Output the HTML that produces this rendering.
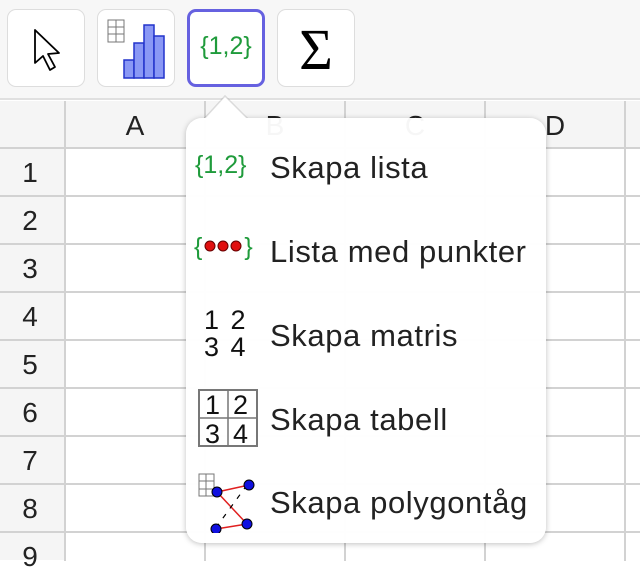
<!DOCTYPE html>
<html><head><meta charset="utf-8"><style>
*{margin:0;padding:0;box-sizing:border-box}
body{width:640px;height:560px;overflow:hidden;background:#fff;font-family:"Liberation Sans",sans-serif;position:relative}
.tb{position:absolute;left:0;top:0;width:640px;height:100px;background:#f7f7f7;border-bottom:2px solid #e0e0e0}
.btn{position:absolute;top:9px;width:78px;height:78px;background:#fff;border:1px solid #ddd;border-radius:9px}
.sel{border:3px solid #6661e0}
.hdr{position:absolute;left:0;top:101px;width:640px;height:47px;background:#f5f5f5}
.rh{position:absolute;left:0;top:148px;width:65px;height:412px;background:#f5f5f5}
.vl{position:absolute;top:101px;width:2px;height:460px;background:#d2d2d2}
.hl{position:absolute;left:0;width:640px;height:2px;background:#d2d2d2}
.t{position:absolute;font-size:28px;color:#222;text-align:center}
.pop{position:absolute;left:186px;top:118px;width:360px;height:425px;background:rgba(255,255,255,.96);border-radius:16px;box-shadow:0 1px 6px rgba(0,0,0,.25)}
.it{position:absolute;left:84px;font-size:31px;letter-spacing:0.6px;color:#222;white-space:nowrap}
.g{color:#1f9b3b}
</style></head><body>
<div class="tb"></div>
<div class="btn" style="left:7px"><svg width="78" height="78"><path d="M27 20 L27 53 L35 46 L42 60 L47 57 L40 44 L51 43 Z" fill="#fff" stroke="#000" stroke-width="1.8" stroke-linejoin="round"/></svg></div>
<div class="btn" style="left:97px"><svg width="78" height="78"><g fill="none" stroke="#777" stroke-width="1"><rect x="10" y="10" width="16" height="22"/><path d="M18 10V32M10 17H26M10 24H26"/></g><g fill="#8a98f5" stroke="#2233cc" stroke-width="1.5"><rect x="26" y="50" width="10" height="18"/><rect x="36" y="33" width="10" height="35"/><rect x="46" y="15" width="10" height="53"/><rect x="56" y="26" width="10" height="42"/></g></svg></div>
<div class="btn sel" style="left:187px"><div style="position:absolute;left:0;right:0;top:20px;text-align:center;font-size:25px;color:#1f9b3b">{1,2}</div></div>
<div class="btn" style="left:277px"><div style="position:absolute;left:0;right:0;top:6px;text-align:center;font-size:58px;font-family:'Liberation Serif',serif;color:#000">Σ</div></div>
<div class="hdr"></div><div class="rh"></div>
<div class="vl" style="left:64px"></div><div class="vl" style="left:204px"></div><div class="vl" style="left:344px"></div><div class="vl" style="left:484px"></div><div class="vl" style="left:624px"></div>
<div class="hl" style="top:147px"></div><div class="hl" style="top:195px"></div><div class="hl" style="top:243px"></div><div class="hl" style="top:291px"></div><div class="hl" style="top:339px"></div><div class="hl" style="top:387px"></div><div class="hl" style="top:435px"></div><div class="hl" style="top:483px"></div><div class="hl" style="top:531px"></div>
<div class="t" style="left:65px;width:140px;top:110px">A</div><div class="t" style="left:205px;width:140px;top:110px">B</div><div class="t" style="left:345px;width:140px;top:110px">C</div><div class="t" style="left:485px;width:140px;top:110px">D</div>
<div class="t" style="left:0;width:60px;top:157px">1</div><div class="t" style="left:0;width:60px;top:205px">2</div><div class="t" style="left:0;width:60px;top:253px">3</div><div class="t" style="left:0;width:60px;top:301px">4</div><div class="t" style="left:0;width:60px;top:349px">5</div><div class="t" style="left:0;width:60px;top:397px">6</div><div class="t" style="left:0;width:60px;top:445px">7</div><div class="t" style="left:0;width:60px;top:493px">8</div><div class="t" style="left:0;width:60px;top:541px">9</div>
<div class="pop">
<svg style="position:absolute;left:18px;top:-26px" width="44" height="28"><path d="M0 27 L21 4 L44 27" fill="#fff" stroke="rgba(0,0,0,.12)" stroke-width="1.5"/><rect x="0" y="26" width="44" height="4" fill="#fff"/></svg>
<div style="position:absolute;left:9px;top:33px;font-size:25px" class="g">{1,2}</div>
<div class="it" style="top:32px">Skapa lista</div>
<div style="position:absolute;left:8px;top:115px;font-size:25px" class="g">{<svg width="42" height="16" style="vertical-align:1px"><g fill="#e01010" stroke="#600" stroke-width="1"><circle cx="8" cy="8" r="5"/><circle cx="21" cy="8" r="5"/><circle cx="34" cy="8" r="5"/></g></svg>}</div>
<div class="it" style="top:116px">Lista med punkter</div>
<div style="position:absolute;left:18px;top:189px;font-size:27px;line-height:27px;color:#111;word-spacing:4px">1 2<br>3 4</div>
<div class="it" style="top:200px">Skapa matris</div>
<svg style="position:absolute;left:12px;top:271px" width="62" height="60"><rect x="1" y="1" width="58" height="56" fill="none" stroke="#777" stroke-width="2"/><path d="M30 1V57M1 29H59" stroke="#777" stroke-width="1.5"/><g font-family="Liberation Sans" font-size="27" fill="#111"><text x="7" y="25">1</text><text x="35" y="25">2</text><text x="7" y="54">3</text><text x="35" y="54">4</text></g></svg>
<div class="it" style="top:284px">Skapa tabell</div>
<svg style="position:absolute;left:12px;top:355px" width="66" height="60"><g fill="none" stroke="#777" stroke-width="1"><rect x="1" y="1" width="15" height="22"/><path d="M8 1V23M1 8H16M1 16H16"/></g><path d="M19 19L51 12M19 19L49 51M18 56L49 51" stroke="#e02020" stroke-width="1.5" fill="none"/><path d="M49 12L17 56" stroke="#000" stroke-width="1.2" stroke-dasharray="5 7"/><g fill="#1010e0" stroke="#000" stroke-width="1"><circle cx="19" cy="19" r="5"/><circle cx="51" cy="12" r="5"/><circle cx="49" cy="51" r="5"/><circle cx="18" cy="56" r="5"/></g></svg>
<div class="it" style="top:367px">Skapa polygontåg</div>
</div>
</body></html>
